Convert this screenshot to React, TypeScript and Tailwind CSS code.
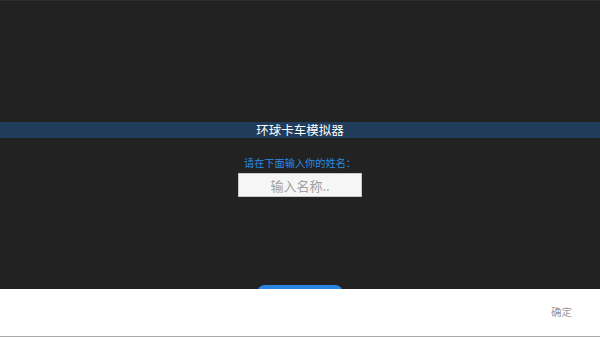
export default function App() {
  return (
    <div
      className="relative h-[337px] w-[600px] overflow-hidden bg-[#222222]"
      style={{ fontFamily: '"Noto Sans CJK SC", "Noto Sans", sans-serif' }}
    >
      <div className="h-px bg-[#2e2e2e]" />
      <div className="flex flex-col items-center pt-[121px]">
        <div className="flex h-[16px] w-full items-center justify-center bg-[#1f3c5a]">
          <span className="text-[12.5px] leading-none text-white">环球卡车模拟器</span>
        </div>
        <p className="mt-[20px] text-[10.2px] leading-none text-[#2a8be0]">请在下面输入你的姓名：</p>
        <div className="mt-[5px] flex h-[24px] w-[124px] items-center justify-center border border-[#c8c8c8] bg-[#f6f6f6]">
          <span className="text-[13px] leading-none text-[#a0a0a0]">输入名称..</span>
        </div>
        <div className="mt-[88px] h-[30px] w-[86px] rounded-[8px] bg-[#2a85e0]" />
      </div>
      <div className="absolute inset-x-0 bottom-0 flex h-[48px] items-center justify-end border-b border-[#a8a8a8] bg-white pr-[28px]">
        <span className="text-[10.5px] leading-none text-[#9a9a9a]">确定</span>
      </div>
    </div>
  );
}
